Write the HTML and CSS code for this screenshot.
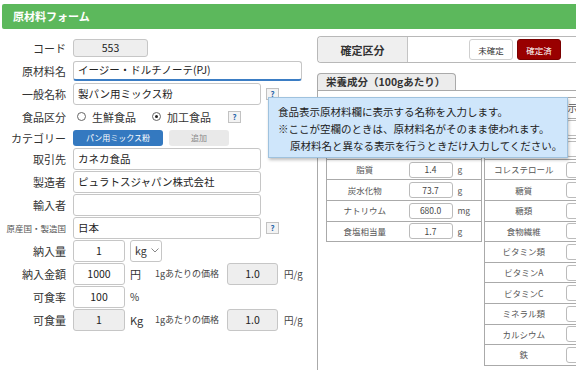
FILE: index.html
```html
<!DOCTYPE html>
<html lang="ja">
<head>
  <meta charset="UTF-8">
  <title>原材料フォーム</title>
  <link rel="stylesheet" href="styles.css">
</head>
<body>

  <div class="header">原材料フォーム</div>

  <div class="main">
    <div class="form">
      <div class="row">
        <span class="label">コード</span>
        <div class="field code">553</div>
      </div>
      <div class="row">
        <span class="label">原材料名</span>
        <div class="field wide">イージー・ドルチノーテ(PJ)</div>
      </div>
      <div class="row">
        <span class="label">一般名称</span>
        <div class="field mid">製パン用ミックス粉</div>
        <span class="help">?</span>
      </div>
      <div class="row">
        <span class="label">食品区分</span>
        <span class="radio"><i class="dot"></i>生鮮食品</span>
        <span class="radio"><i class="dot checked"></i>加工食品</span>
        <span class="help">?</span>
      </div>
      <div class="row short">
        <span class="label">カテゴリー</span>
        <span class="cat-btn">パン用ミックス粉</span>
        <span class="add-btn">追加</span>
      </div>
      <div class="row">
        <span class="label">取引先</span>
        <div class="field mid">カネカ食品</div>
      </div>
      <div class="row">
        <span class="label">製造者</span>
        <div class="field mid">ピュラトスジャパン株式会社</div>
      </div>
      <div class="row">
        <span class="label">輸入者</span>
        <div class="field mid"></div>
      </div>
      <div class="row">
        <span class="label small">原産国・製造国</span>
        <div class="field mid">日本</div>
        <span class="help">?</span>
      </div>
      <div class="row">
        <span class="label">納入量</span>
        <div class="field num">1</div>
        <div class="select">kg
          <svg width="8" height="5" viewBox="0 0 8 5"><path d="M0.5 0.5 L4 4 L7.5 0.5" fill="none" stroke="#888" stroke-width="1"/></svg>
        </div>
      </div>
      <div class="row">
        <span class="label">納入金額</span>
        <div class="field num">1000</div>
        <span class="unit">円</span>
        <span class="per">1gあたりの価格</span>
        <div class="field price">1.0</div>
        <span class="per-unit">円/g</span>
      </div>
      <div class="row">
        <span class="label">可食率</span>
        <div class="field num">100</div>
        <span class="unit pct">%</span>
      </div>
      <div class="row">
        <span class="label">可食量</span>
        <div class="field num gray">1</div>
        <span class="unit">Kg</span>
        <span class="per">1gあたりの価格</span>
        <div class="field price">1.0</div>
        <span class="per-unit">円/g</span>
      </div>
    </div>

    <div class="side">
      <div class="confirm">
        <div class="confirm-title">確定区分</div>
        <div class="confirm-btns">
          <span class="state">未確定</span>
          <span class="state on">確定済</span>
        </div>
      </div>

      <div class="tab">栄養成分（100gあたり）</div>
      <div class="panel">
        <!-- 上の3行はツールチップの下に隠れている -->
        <table class="nutri left">
          <tr><td class="name"></td><td class="value"></td></tr>
          <tr><td class="name"></td><td class="value"><span class="val"></span></td></tr>
          <tr><td class="name"></td><td class="value"><span class="val"></span></td></tr>
          <tr><td class="name">脂質</td><td class="value"><span class="val">1.4</span><span class="u">g</span></td></tr>
          <tr><td class="name">炭水化物</td><td class="value"><span class="val">73.7</span><span class="u">g</span></td></tr>
          <tr><td class="name">ナトリウム</td><td class="value"><span class="val">680.0</span><span class="u">mg</span></td></tr>
          <tr><td class="name">食塩相当量</td><td class="value"><span class="val">1.7</span><span class="u">g</span></td></tr>
        </table>

        <table class="nutri right">
          <tr><td class="name"></td><td class="value"><span class="head">表示</span></td></tr>
          <tr><td class="name"></td><td class="value"><span class="val"></span></td></tr>
          <tr><td class="name"></td><td class="value"><span class="val"></span></td></tr>
          <tr><td class="name">コレステロール</td><td class="value"><span class="val"></span></td></tr>
          <tr><td class="name">糖質</td><td class="value"><span class="val"></span></td></tr>
          <tr><td class="name">糖類</td><td class="value"><span class="val"></span></td></tr>
          <tr><td class="name">食物繊維</td><td class="value"><span class="val"></span></td></tr>
          <tr><td class="name">ビタミン類</td><td class="value"><span class="val"></span></td></tr>
          <tr><td class="name">ビタミンA</td><td class="value"><span class="val"></span></td></tr>
          <tr><td class="name">ビタミンC</td><td class="value"><span class="val"></span></td></tr>
          <tr><td class="name">ミネラル類</td><td class="value"><span class="val"></span></td></tr>
          <tr><td class="name">カルシウム</td><td class="value"><span class="val"></span></td></tr>
          <tr><td class="name">鉄</td><td class="value"><span class="val"></span></td></tr>
        </table>
      </div>
    </div>
  </div>

  <!-- ツールチップ -->
  <div class="tip">
    <p>食品表示原材料欄に表示する名称を入力します。</p>
    <p>※ここが空欄のときは、原材料名がそのまま使われます。</p>
    <p class="indent">原材料名と異なる表示を行うときだけ入力してください。</p>
  </div>

</body>
</html>
```

FILE: styles.css
```css
* {
  box-sizing: border-box;
}

body {
  margin: 0;
  width: 576px;
  height: 370px;
  overflow: hidden;
  position: relative;
  font-family: "Noto Sans CJK JP", "Liberation Sans", sans-serif;
  color: #333;
  background: #fff;
}

.header {
  margin: 4px 0 0 2px;
  height: 25px;
  background: #5cb85c;
  color: #fff;
  font-size: 11px;
  font-weight: bold;
  line-height: 25px;
  padding-left: 11px;
  border-radius: 2px 0 0 2px;
}

.main {
  display: flex;
}

/* 左側フォーム */
.form {
  width: 317px;
  flex: none;
  padding-top: 7px;
}

.row {
  display: flex;
  align-items: center;
  height: 23px;
}

.row.short {
  height: 19px;
}

.label {
  width: 66px;
  flex: none;
  margin-right: 7px;
  text-align: right;
  font-size: 11px;
  line-height: 14px;
  color: #333;
}

.label.small {
  font-size: 8.5px;
  color: #555;
}

.field {
  height: 22px;
  display: flex;
  align-items: center;
  padding: 0 4px;
  border: 1px solid #c6c6c6;
  border-radius: 3px;
  background: #fff;
  font-size: 10.5px;
  line-height: 14px;
  color: #222;
}

.field.code {
  width: 75px;
  height: 18px;
  justify-content: center;
  background: #eee;
}

.field.wide {
  width: 229px;
  height: 20px;
  border-bottom: 2px solid #3b7dc4;
}

.field.mid {
  width: 188px;
}

.field.num {
  width: 52px;
  justify-content: center;
}

.field.gray {
  background: #eee;
}

.field.price {
  width: 51px;
  justify-content: center;
  background: #eee;
}

.help {
  width: 13px;
  height: 12px;
  margin-left: 5px;
  display: flex;
  align-items: center;
  justify-content: center;
  border: 1px solid #c2c2c2;
  background: #f3f3f3;
  color: #2a66aa;
  font-size: 8px;
  font-weight: bold;
}

.radio {
  display: flex;
  align-items: center;
  margin-left: 4px;
  margin-right: 12px;
  font-size: 11px;
  line-height: 14px;
}

.dot {
  width: 9px;
  height: 9px;
  margin-right: 6px;
  border: 1px solid #666;
  border-radius: 50%;
  position: relative;
}

.dot.checked::after {
  content: "";
  position: absolute;
  left: 2px;
  top: 2px;
  width: 3px;
  height: 3px;
  border-radius: 50%;
  background: #222;
}

.cat-btn {
  width: 90px;
  height: 16px;
  display: flex;
  align-items: center;
  justify-content: center;
  background: #3479c0;
  color: #fff;
  border-radius: 3px;
  font-size: 8px;
}

.add-btn {
  width: 60px;
  height: 16px;
  margin-left: 6px;
  display: flex;
  align-items: center;
  justify-content: center;
  background: #e9e9e9;
  color: #888;
  border-radius: 3px;
  font-size: 8px;
}

.select {
  width: 32px;
  height: 22px;
  margin-left: 5px;
  display: flex;
  align-items: center;
  gap: 4px;
  padding-left: 4px;
  border: 1px solid #c6c6c6;
  border-radius: 3px;
  font-size: 10.5px;
}

.unit {
  width: 25px;
  margin-left: 5px;
  font-size: 11px;
}

.unit.pct {
  font-size: 10px;
}

.per {
  width: 72px;
  font-size: 9px;
  color: #444;
  white-space: nowrap;
}

.per-unit {
  margin-left: 6px;
  font-size: 9.5px;
  color: #444;
}

/* 右側 (右端で切れている) */
.side {
  width: 259px;
  flex: none;
  padding-top: 7px;
  overflow: hidden;
}

.confirm {
  display: flex;
  height: 27px;
  border: 1px solid #b8b8b8;
  border-right: none;
  border-radius: 4px 0 0 4px;
}

.confirm-title {
  width: 90px;
  display: flex;
  align-items: center;
  justify-content: center;
  background: #efefef;
  border-right: 1px solid #c4c4c4;
  border-radius: 4px 0 0 4px;
  font-size: 11px;
  font-weight: bold;
}

.confirm-btns {
  display: flex;
  align-items: center;
  gap: 4px;
  padding-left: 61px;
}

.state {
  width: 44px;
  height: 21px;
  display: flex;
  align-items: center;
  justify-content: center;
  border: 1px solid #cfcfcf;
  border-radius: 3px;
  background: #fff;
  font-size: 8.5px;
  color: #333;
}

.state.on {
  background: #990000;
  border-color: #7a0000;
  color: #fff;
}

.tab {
  width: 139px;
  height: 17px;
  margin-top: 10px;
  padding-left: 8px;
  border: 1px solid #aaa;
  border-bottom: none;
  border-radius: 4px 4px 0 0;
  background: #ececec;
  font-size: 10.5px;
  font-weight: bold;
  line-height: 16px;
}

.panel {
  height: 290px;
  display: flex;
  align-items: flex-start;
  gap: 2px;
  padding: 6px 0 0 8px;
  border-top: 1px solid #aaa;
  border-left: 1px solid #aaa;
  overflow: hidden;
}

.nutri {
  border-collapse: collapse;
  border: 1px solid #aaa;
  table-layout: fixed;
  flex: none;
}

.nutri.left {
  width: 156px;
}

.nutri.right {
  width: 130px;
}

.nutri tr {
  height: 20.6px;
  border-bottom: 1px solid #aaa;
}

.nutri td {
  padding: 0;
  font-size: 8.5px;
  line-height: 11px;
  color: #555;
  white-space: nowrap;
}

.nutri .name {
  text-align: center;
}

.nutri.left .name {
  width: 76px;
}

.nutri.right .name {
  width: 78px;
}

.nutri.left .value {
  padding-left: 6px;
}

.nutri.right .value {
  padding-left: 3px;
}

.val {
  width: 44px;
  height: 16px;
  display: inline-flex;
  align-items: center;
  justify-content: center;
  vertical-align: middle;
  border: 1px solid #bbb;
  border-radius: 3px;
  color: #444;
}

.u {
  margin-left: 5px;
  vertical-align: middle;
}

.head {
  margin-left: -8px;
  font-size: 10px;
}

/* ツールチップ */
.tip {
  position: absolute;
  left: 268px;
  top: 97px;
  width: 300px;
  height: 61px;
  padding: 5px 0 0 9px;
  background: #cfe6fb;
  border: 1px solid #9fc2de;
  box-shadow: 1px 2px 3px rgba(0, 0, 0, 0.25);
  font-size: 10.5px;
  line-height: 17px;
  color: #222;
}

.tip p {
  margin: 0;
  white-space: nowrap;
}

.tip .indent {
  padding-left: 12px;
}
```
